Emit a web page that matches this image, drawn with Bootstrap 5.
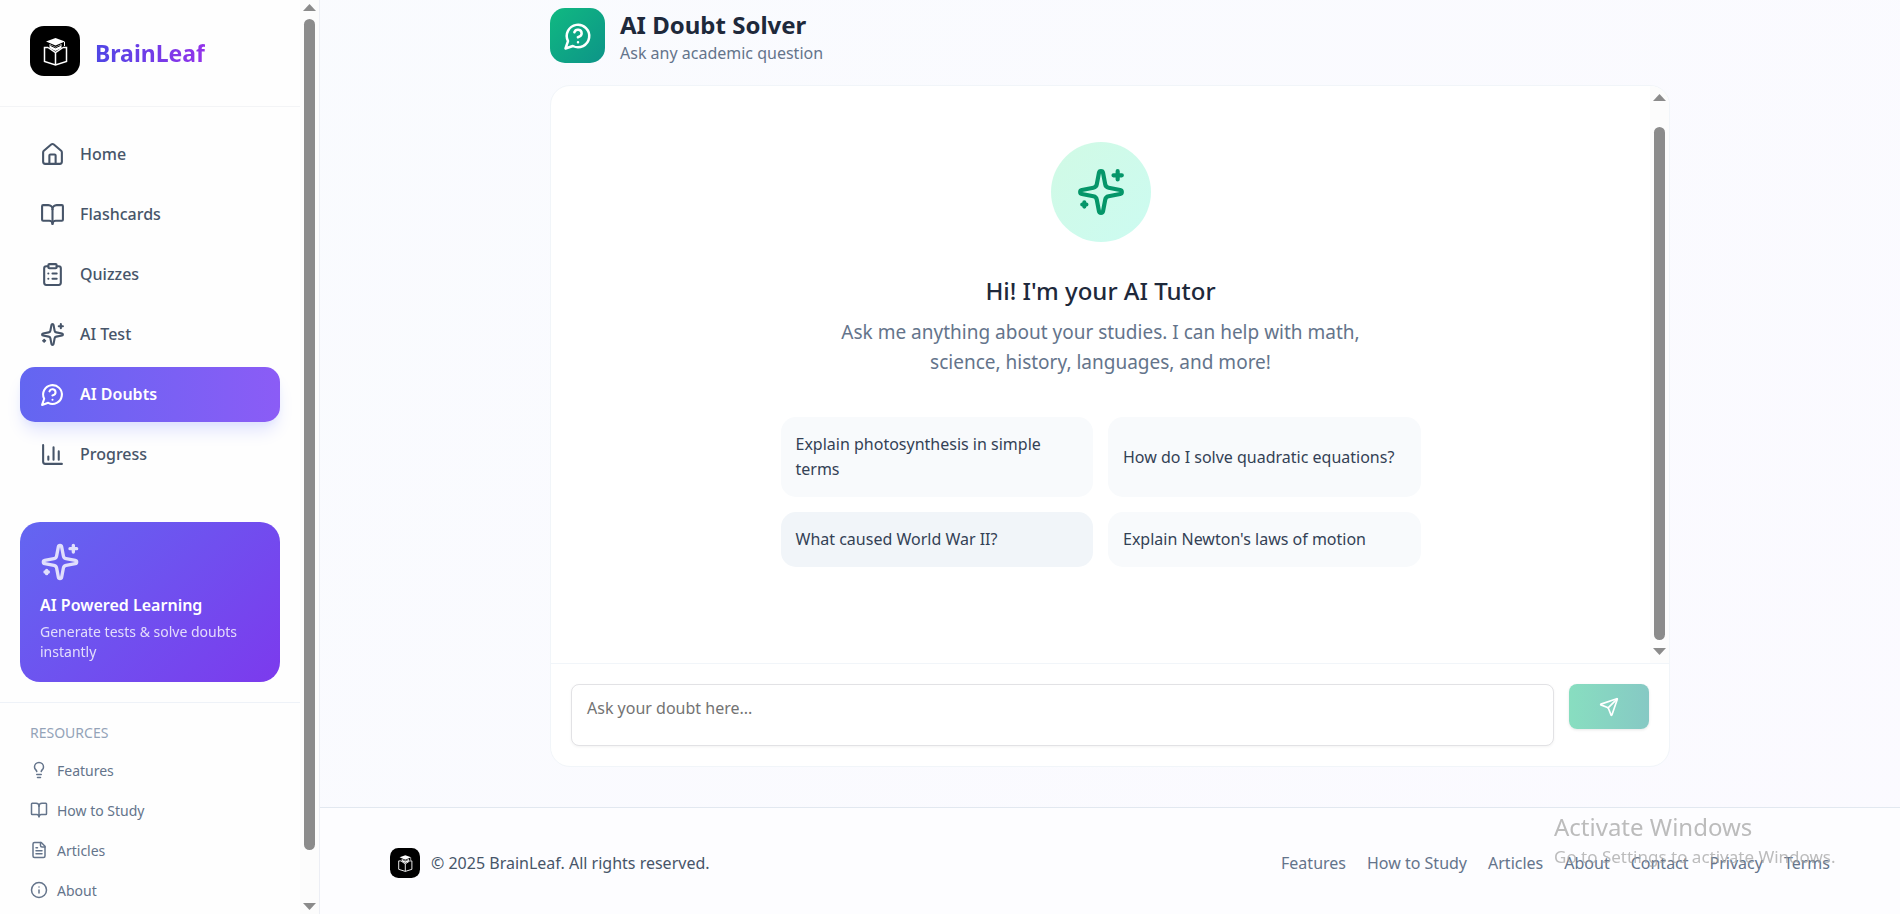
<!DOCTYPE html>
<html lang="en">
<head>
<meta charset="utf-8">
<meta name="viewport" content="width=device-width, initial-scale=1">
<title>BrainLeaf - AI Doubt Solver</title>
<link href="https://cdn.jsdelivr.net/npm/bootstrap@5.3.0/dist/css/bootstrap.min.css" rel="stylesheet">
<style>
  :root { --ink: #1e293b; --slate: #475569; --muted: #64748b; --line: #f1f5f9; }
  body { font-family: "Noto Sans", "Open Sans", sans-serif; font-size: 16px; line-height: 25px; color: var(--ink); background: linear-gradient(135deg, #f9fbfe, #fbfaff); }
  a { text-decoration: none; color: inherit; }
  .ico { fill: none; stroke: currentColor; stroke-width: 2; stroke-linecap: round; stroke-linejoin: round; flex-shrink: 0; width: 25px; height: 25px; }
  .ico-sm { width: 18px; height: 18px; }
  .ico-md { width: 30px; height: 30px; }
  .ico-lg { width: 40px; height: 40px; }
  .ico-xl { width: 50px; height: 50px; }

  .side { width: 320px; background: #fefefe; border-right: 1px solid #eceef4; }
  .brand { padding: 26px 30px 30px; gap: 15px; border-bottom: 1px solid #f3f4f6; }
  .brand-name { font-size: 23px; line-height: 30px; padding-top: 3px; font-weight: 700; background: linear-gradient(90deg, #4f46e5, #9333ea); -webkit-background-clip: text; background-clip: text; color: transparent; }
  .menu { padding: 20px; gap: 5px; }
  .menu a { gap: 15px; padding: 15px 20px; border-radius: 15px; font-weight: 500; color: var(--slate); }
  .menu a.active { color: #fff; font-weight: 600; background: linear-gradient(90deg, #6366f1, #8b5cf6); box-shadow: 0 12px 18px -4px #e0e3fe, 0 5px 8px -5px #c7d2fe; }
  .promo { margin: 20px; padding: 20px; border-radius: 20px; color: #fff; background: linear-gradient(135deg, #6366f1, #7c3aed); }
  .promo h2 { font-size: 16px; line-height: 25px; font-weight: 600; margin: 11px 0 4px; }
  .promo p { font-size: 14px; line-height: 20px; opacity: .8; }
  .promo .ico { opacity: .8; }
  .resources { padding: 17px 30px; border-top: 1px solid #eef2f8; font-size: 14px; color: var(--muted); }
  .resources h2 { font-size: 14px; line-height: 25px; color: #94a3b8; margin-bottom: 5px; font-weight: 400; }
  .resources a { gap: 9px; height: 40px; }

  .track { width: 19px; background: #fcfcfc; padding: 4px 0; }
  .track svg { width: 13px; height: 7px; fill: #8b8b8b; }
  .thumb { width: 11px; border-radius: 6px; background: #8b8b8b; }

  .shell { width: 100%; max-width: 1120px; }
  .page-top { padding: 8px 0 19px; gap: 15px; }
  .page-icon { width: 55px; height: 55px; border-radius: 15px; color: #fff; background: linear-gradient(135deg, #10b981, #0d9488); }
  .page-top h1 { font-size: 24px; line-height: 33px; font-weight: 700; margin: 0; }
  .page-top p { font-size: 16px; line-height: 25px; color: var(--muted); }
  .chat { background: #fff; border: 1px solid var(--line); border-radius: 20px; margin-bottom: 40px; }
  .welcome { padding-top: 56px; }
  .halo { width: 100px; height: 100px; color: #059669; background: linear-gradient(135deg, #d1fae5, #ccfbf1); }
  .welcome h2 { font-size: 24px; line-height: 35px; font-weight: 500; margin: 31px 0 9px; }
  .welcome p { font-size: 19px; line-height: 30px; max-width: 560px; color: var(--muted); margin-bottom: 40px; }
  .prompts { width: 640px; max-width: 100%; display: grid; grid-template-columns: 1fr 1fr; gap: 15px; }
  .prompts button { border: 0; border-radius: 15px; background: #f8fafc; color: #334155; padding: 15px; text-align: left; font-size: 16px; line-height: 25px; }
  .prompts button.hovered { background: #f1f5f9; }
  .ask { padding: 20px; gap: 15px; border-top: 1px solid var(--line); }
  .ask textarea { height: 62px; padding: 11px 15px; border: 1px solid #e2e2e5; border-radius: 8px; resize: none; font-size: 16px; line-height: 25px; box-shadow: 0 1px 3px #0000000d; }
  .ask textarea::placeholder { color: #737373; }
  .send { width: 80px; height: 45px; border: 0; border-radius: 8px; color: #fff; background: linear-gradient(90deg, #88dec0, #86c9c4); box-shadow: 0 1px 3px #0000001a; }
  .send .ico { width: 20px; height: 20px; }

  .foot { background: #fdfdff; border-top: 1px solid #e2e8f0; padding: 40px 20px 36px; color: var(--muted); }
  .foot-in { max-width: 1440px; }
  .foot-in .copy { color: var(--slate); gap: 11px; }
  .foot-in nav { gap: 21px; }
  .activate { position: fixed; right: 60px; bottom: 45px; width: 286px; color: #a0a0a0; opacity: .7; font-size: 17px; line-height: 25px; white-space: nowrap; pointer-events: none; }
  .activate strong { font-size: 24px; line-height: 35px; font-weight: 400; }
</style>
</head>
<body class="vh-100 overflow-hidden d-flex">

<svg class="d-none" xmlns="http://www.w3.org/2000/svg">
  <symbol id="logo" viewBox="0 0 50 50">
    <rect width="50" height="50" rx="14" fill="#000"/>
    <path d="M16 15.500 25.500 12l9.500 3.500-9.500 4z" fill="#fff"/>
    <path d="M34.500 16v4" stroke="#fff" stroke-width="1" fill="none"/>
    <path d="M19.500 18v4l6 3 6-3v-4l-6 3z" fill="#fff"/>
    <path d="m20.500 19.500 5 2.300 5-2.300" stroke="#000" fill="none" stroke-width="1"/>
    <path d="M18 21.500h-3.500v14l11 3.500 11-3.500v-14H33M18 21.500l7.500 5 7.500-5M25.500 26.500V39" fill="none" stroke="#fff" stroke-width="1.500"/>
  </symbol>
  <symbol id="home" viewBox="0 0 24 24"><path d="M15 21v-8a1 1 0 0 0-1-1h-4a1 1 0 0 0-1 1v8"/><path d="M3 10a2 2 0 0 1 .709-1.528l7-5.999a2 2 0 0 1 2.582 0l7 5.999A2 2 0 0 1 21 10v9a2 2 0 0 1-2 2H5a2 2 0 0 1-2-2z"/></symbol>
  <symbol id="book" viewBox="0 0 24 24"><path d="M12 7v14"/><path d="M3 18a1 1 0 0 1-1-1V4a1 1 0 0 1 1-1h5a4 4 0 0 1 4 4 4 4 0 0 1 4-4h5a1 1 0 0 1 1 1v13a1 1 0 0 1-1 1h-6a3 3 0 0 0-3 3 3 3 0 0 0-3-3z"/></symbol>
  <symbol id="clipboard" viewBox="0 0 24 24"><rect width="8" height="4" x="8" y="2" rx="1"/><path d="M16 4h2a2 2 0 0 1 2 2v14a2 2 0 0 1-2 2H6a2 2 0 0 1-2-2V6a2 2 0 0 1 2-2h2M12 11h4M12 16h4M8 11h.01M8 16h.01"/></symbol>
  <symbol id="sparkles" viewBox="0 0 24 24"><path d="M11.017 2.814a1 1 0 0 1 1.966 0l1.051 5.558a2 2 0 0 0 1.594 1.594l5.558 1.051a1 1 0 0 1 0 1.966l-5.558 1.051a2 2 0 0 0-1.594 1.594l-1.051 5.558a1 1 0 0 1-1.966 0l-1.051-5.558a2 2 0 0 0-1.594-1.594l-5.558-1.051a1 1 0 0 1 0-1.966l5.558-1.051a2 2 0 0 0 1.594-1.594z"/><path d="M20 2v4M22 4h-4M4 17v2M5 18H3"/></symbol>
  <symbol id="question" viewBox="0 0 24 24"><path d="M7.900 20A9 9 0 1 0 4 16.100L2 22Z"/><path d="M9.090 9a3 3 0 0 1 5.830 1c0 2-3 3-3 3M12 17h.01"/></symbol>
  <symbol id="chart" viewBox="0 0 24 24"><path d="M3 3v16a2 2 0 0 0 2 2h16M18 17V9M13 17V5M8 17v-3"/></symbol>
  <symbol id="bulb" viewBox="0 0 24 24"><path d="M15 14c.2-1 .7-1.700 1.500-2.500 1-.9 1.500-2.200 1.500-3.500A6 6 0 0 0 6 8c0 1 .2 2.200 1.500 3.500.7.7 1.300 1.500 1.500 2.500M9 18h6M10 22h4"/></symbol>
  <symbol id="file" viewBox="0 0 24 24"><path d="M15 2H6a2 2 0 0 0-2 2v16a2 2 0 0 0 2 2h12a2 2 0 0 0 2-2V7Z"/><path d="M14 2v4a2 2 0 0 0 2 2h4M10 9H8M16 13H8M16 17H8"/></symbol>
  <symbol id="info" viewBox="0 0 24 24"><circle cx="12" cy="12" r="10"/><path d="M12 16v-4M12 8h.01"/></symbol>
  <symbol id="plane" viewBox="0 0 24 24"><path d="M14.536 21.686a.5.5 0 0 0 .937-.024l6.500-19a.496.496 0 0 0-.635-.635l-19 6.500a.5.5 0 0 0-.024.937l7.930 3.180a2 2 0 0 1 1.112 1.110z"/><path d="m21.854 2.147-10.940 10.939"/></symbol>
  <symbol id="up" viewBox="0 0 13 7"><path d="M6.500 0 13 7H0z"/></symbol>
  <symbol id="down" viewBox="0 0 13 7"><path d="M0 0h13L6.500 7z"/></symbol>
</svg>

<aside class="side vh-100 d-flex flex-shrink-0">
  <div class="flex-fill overflow-hidden">
    <a href="#" class="brand d-flex align-items-center">
      <svg class="ico-xl flex-shrink-0"><use href="#logo"/></svg>
      <span class="brand-name">BrainLeaf</span>
    </a>
    <nav class="menu d-flex flex-column">
      <a href="#" class="d-flex"><svg class="ico"><use href="#home"/></svg>Home</a>
      <a href="#" class="d-flex"><svg class="ico"><use href="#book"/></svg>Flashcards</a>
      <a href="#" class="d-flex"><svg class="ico"><use href="#clipboard"/></svg>Quizzes</a>
      <a href="#" class="d-flex"><svg class="ico"><use href="#sparkles"/></svg>AI Test</a>
      <a href="#" class="d-flex active" aria-current="page"><svg class="ico"><use href="#question"/></svg>AI Doubts</a>
      <a href="#" class="d-flex"><svg class="ico"><use href="#chart"/></svg>Progress</a>
    </nav>
    <section class="promo">
      <svg class="ico ico-lg d-block"><use href="#sparkles"/></svg>
      <h2>AI Powered Learning</h2>
      <p class="mb-0">Generate tests &amp; solve doubts instantly</p>
    </section>
    <nav class="resources d-flex flex-column">
      <h2>RESOURCES</h2>
      <a href="#" class="d-flex align-items-center"><svg class="ico ico-sm"><use href="#bulb"/></svg>Features</a>
      <a href="#" class="d-flex align-items-center"><svg class="ico ico-sm"><use href="#book"/></svg>How to Study</a>
      <a href="#" class="d-flex align-items-center"><svg class="ico ico-sm"><use href="#file"/></svg>Articles</a>
      <a href="#" class="d-flex align-items-center"><svg class="ico ico-sm"><use href="#info"/></svg>About</a>
    </nav>
  </div>
  <div class="track d-flex flex-column align-items-center flex-shrink-0" aria-hidden="true">
    <svg class="flex-shrink-0 mb-2"><use href="#up"/></svg>
    <div class="thumb" style="flex:831 0 0"></div>
    <div style="flex:53 0 0"></div>
    <svg class="flex-shrink-0"><use href="#down"/></svg>
  </div>
</aside>

<div class="flex-fill d-flex flex-column vh-100 overflow-hidden">
  <main class="shell mx-auto d-flex flex-column flex-fill">
    <header class="page-top d-flex">
      <div class="page-icon d-flex align-items-center justify-content-center"><svg class="ico ico-md"><use href="#question"/></svg></div>
      <div>
        <h1>AI Doubt Solver</h1>
        <p class="mb-0">Ask any academic question</p>
      </div>
    </header>
    <section class="chat d-flex flex-column flex-fill overflow-hidden">
      <div class="d-flex flex-fill">
        <div class="welcome flex-fill d-flex flex-column align-items-center text-center">
          <div class="halo rounded-circle d-flex align-items-center justify-content-center"><svg class="ico ico-xl"><use href="#sparkles"/></svg></div>
          <h2>Hi! I'm your AI Tutor</h2>
          <p>Ask me anything about your studies. I can help with math, science, history, languages, and more!</p>
          <div class="prompts">
            <button type="button">Explain photosynthesis in simple terms</button>
            <button type="button">How do I solve quadratic equations?</button>
            <button type="button" class="hovered">What caused World War II?</button>
            <button type="button">Explain Newton's laws of motion</button>
          </div>
        </div>
        <div class="track d-flex flex-column align-items-center flex-shrink-0 py-2" aria-hidden="true">
          <svg class="flex-shrink-0"><use href="#up"/></svg>
          <div style="flex:26 0 0"></div>
          <div class="thumb mb-2" style="flex:513 0 0"></div>
          <svg class="flex-shrink-0"><use href="#down"/></svg>
        </div>
      </div>
      <form class="ask d-flex align-items-start">
        <textarea class="form-control flex-fill" aria-label="Your doubt" placeholder="Ask your doubt here..."></textarea>
        <button type="button" class="send flex-shrink-0 d-flex align-items-center justify-content-center" aria-label="Send"><svg class="ico"><use href="#plane"/></svg></button>
      </form>
    </section>
  </main>
  <footer class="foot">
    <div class="foot-in mx-auto d-flex justify-content-between align-items-center">
      <div class="copy d-flex align-items-center"><svg class="ico-md"><use href="#logo"/></svg><span>© 2025 BrainLeaf. All rights reserved.</span></div>
      <nav class="d-flex">
        <a href="#">Features</a><a href="#">How to Study</a><a href="#">Articles</a><a href="#">About</a><a href="#">Contact</a><a href="#">Privacy</a><a href="#">Terms</a>
      </nav>
    </div>
  </footer>
</div>

<div class="activate"><strong class="d-block">Activate Windows</strong>Go to Settings to activate Windows.</div>

<script src="https://cdn.jsdelivr.net/npm/bootstrap@5.3.0/dist/js/bootstrap.bundle.min.js"></script>
</body>
</html>
